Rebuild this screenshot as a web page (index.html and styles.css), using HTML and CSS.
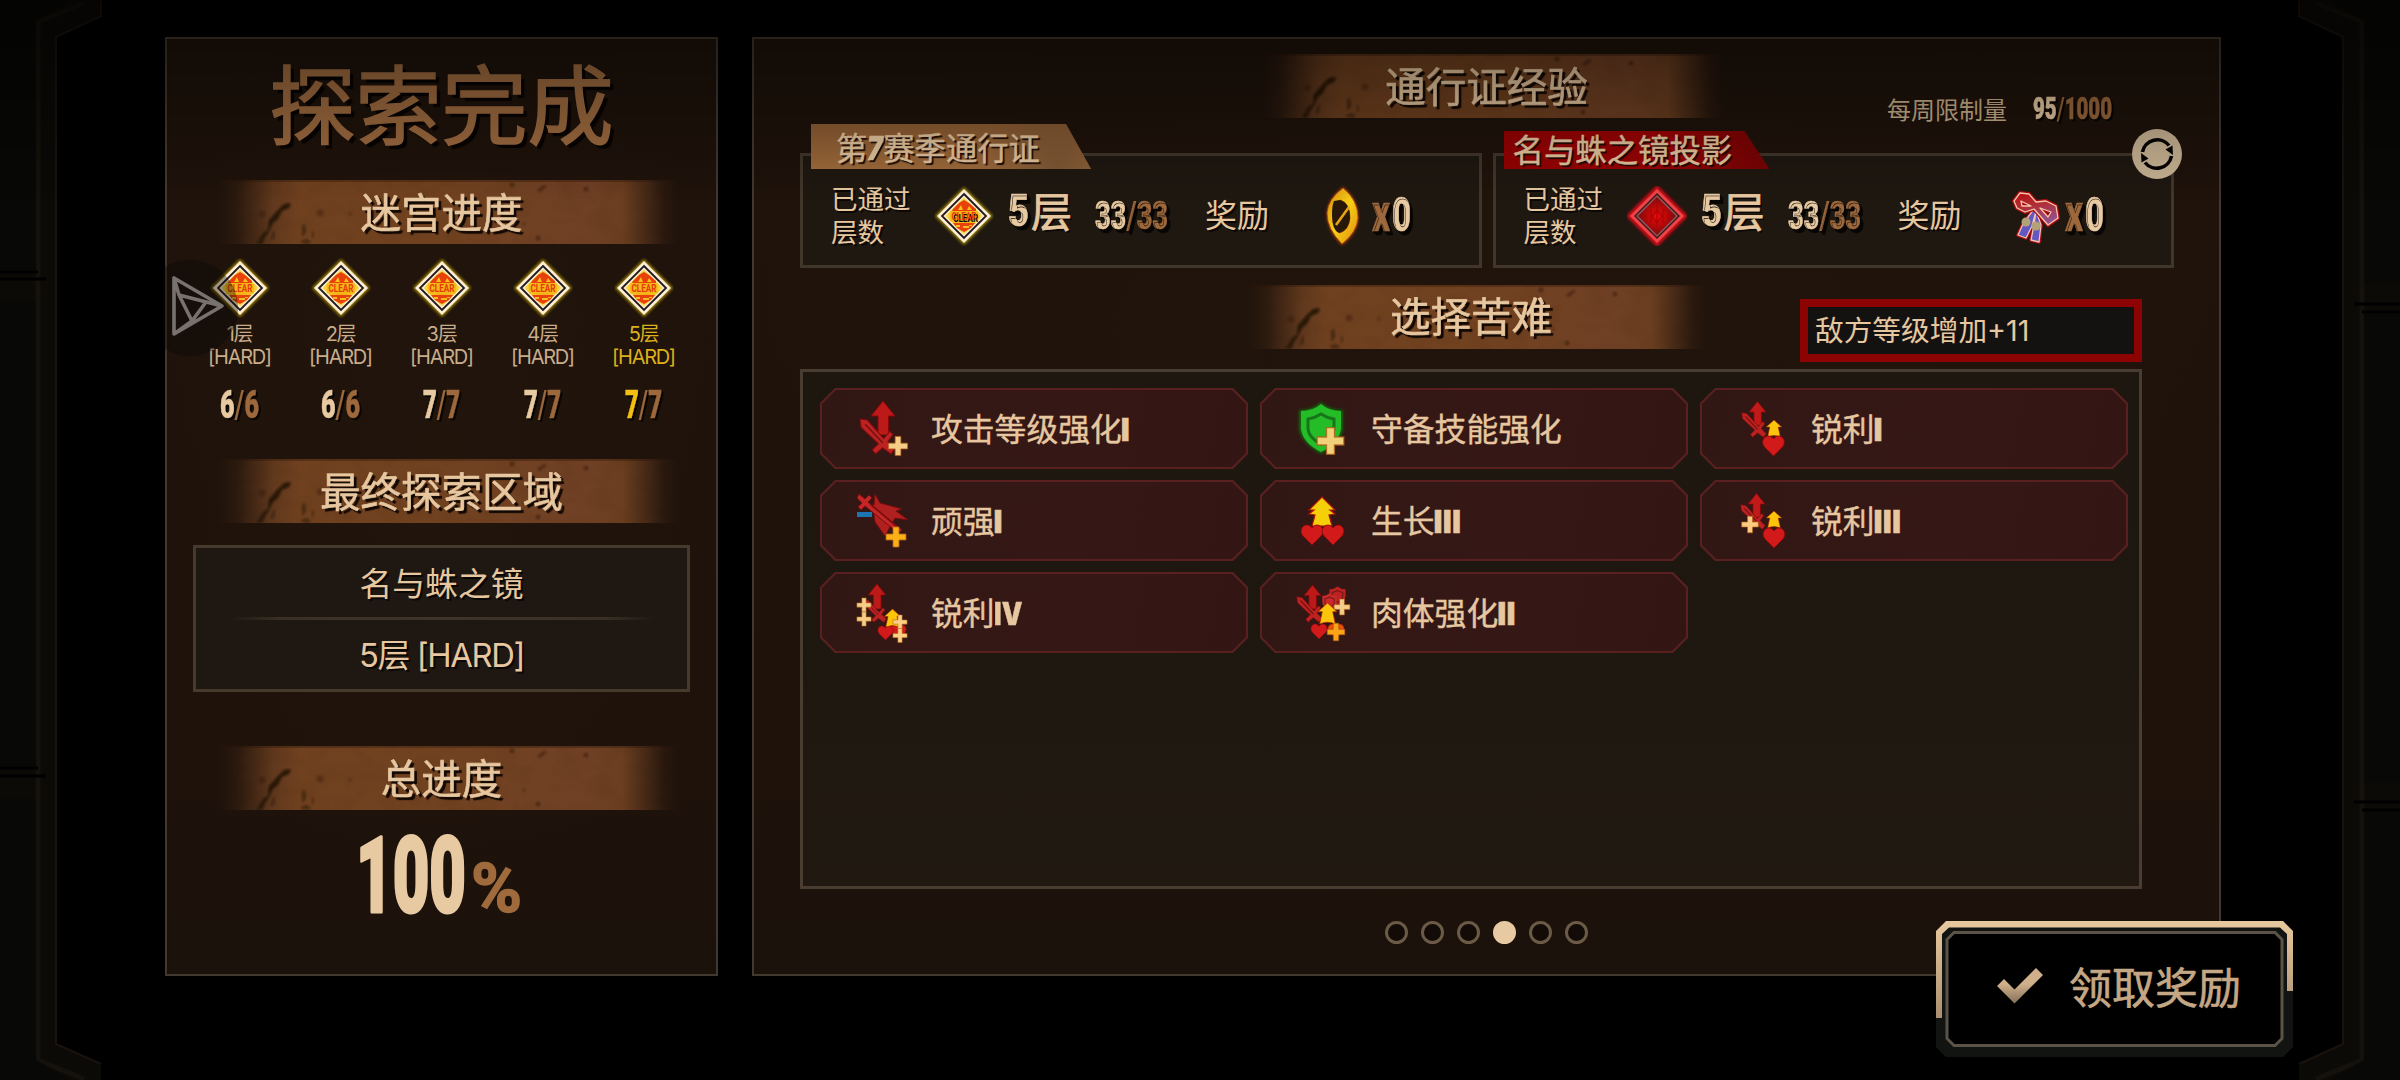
FILE: index.html
```html
<!DOCTYPE html>
<html lang="zh-CN">
<head>
<meta charset="utf-8">
<title>探索完成</title>
<link rel="stylesheet" href="styles.css">
</head>
<body>
<svg class="defs" width="0" height="0" aria-hidden="true">
  <defs>
    <linearGradient id="gold" x1="0" y1="0" x2="0" y2="1"><stop offset="0" stop-color="#e8c99f"/><stop offset="1" stop-color="#a98f70"/></linearGradient>
    <linearGradient id="check" x1="0" y1="0" x2="0" y2="1"><stop offset=".45" stop-color="#cfb08a"/><stop offset="1" stop-color="#84705a"/></linearGradient>
    <linearGradient id="leaf" x1="0" y1="0" x2="1" y2="1"><stop offset="0" stop-color="#d98a12"/><stop offset=".5" stop-color="#f6cf14"/><stop offset="1" stop-color="#e08a10"/></linearGradient>
    <linearGradient id="bow" x1="0" y1="0" x2="0.3" y2="1"><stop offset="0" stop-color="#b80d10"/><stop offset=".5" stop-color="#b0303a"/><stop offset="1" stop-color="#94508c"/></linearGradient>
    <radialGradient id="amber"><stop offset=".2" stop-color="#f0a50e"/><stop offset=".8" stop-color="#f5cd2c"/><stop offset="1" stop-color="#f8dd70"/></radialGradient>
    <radialGradient id="ruby"><stop offset=".1" stop-color="#e60808"/><stop offset="1" stop-color="#7a0a0c"/></radialGradient>
    <filter id="soft" x="-30%" y="-30%" width="160%" height="160%"><feGaussianBlur stdDeviation="1.6"/></filter>
    <filter id="grain" x="0" y="0" width="100%" height="100%">
      <feTurbulence type="fractalNoise" baseFrequency=".035 .05" numOctaves="3" seed="8"/>
      <feColorMatrix values="0 0 0 0 .05  0 0 0 0 .02  0 0 0 0 0  0 0 0 2.2 -1.0"/>
    </filter>
    <filter id="haze" x="-10%" y="-10%" width="120%" height="120%"><feGaussianBlur stdDeviation=".9"/></filter>
  </defs>
  <symbol id="scuff" viewBox="0 0 460 64">
    <rect width="460" height="64" filter="url(#grain)" opacity=".1"/>
    <g fill="#180c06" opacity=".75" filter="url(#haze)">
      <path d="M44 64l7-11 5-3 1-10 7-8 8-8 5-1 2 1-2 4-7 3-4 8-5 4-4 8-4 6-3 7z"/>
      <path d="M90 46l3-2 1 8-4 5zM100 50l2 5-2 4zM88 62l6-3 5 3-4 2zM61 52l2-2-1 9-3 1z" opacity=".6"/>
      <circle cx="108" cy="33" r="3.500" opacity=".35"/><circle cx="50" cy="34" r="3.500" opacity=".35"/><circle cx="138" cy="34" r="2" opacity=".3"/><circle cx="300" cy="5" r="2.200" opacity=".6"/>
      <path d="M325 10l7-5 3 1-7 6z" opacity=".5"/><circle cx="326" cy="58" r="2.200" opacity=".6"/><circle cx="374" cy="9" r="2.300" opacity=".5"/><circle cx="312" cy="44" r="1.800" opacity=".35"/>
    </g>
  </symbol>
  <symbol id="clear" viewBox="0 0 60 60">
    <path d="M30 1L59 30 30 59 1 30z" fill="#c4a60a" filter="url(#soft)" opacity=".8"/>
    <path d="M30 3L57 30 30 57 3 30z" fill="#fdeed8"/>
    <path d="M30 8L52 30 30 52 8 30z" fill="#fbe9c8" stroke="#211a1c" stroke-width="1.800"/>
    <path d="M30 11.500L48.500 30 30 48.500 11.500 30z" fill="url(#amber)"/>
    <path d="M19 23l6-6 5-3 5 3 7 6v2H18zM19 37h22l-4 5-7 4-7-4z" fill="#e8410b"/>
    <path d="M24 24l3-5 2 5zm9 0l2-4 3 4zM22 39h4v2h-4zm7 1h6v2h-6zm6-1h3v1h-3z" fill="#f5c019"/>
    <path d="M16 25.500h28v10H16z" fill="#f4b818"/>
    <text x="17.500" y="34.200" class="stamp" textLength="25" lengthAdjust="spacingAndGlyphs">CLEAR</text>
  </symbol>
  <symbol id="redgem" viewBox="0 0 60 60">
    <path d="M30-1L61 30 30 61-1 30z" fill="#e00d12" filter="url(#soft)" opacity=".9"/>
    <path d="M30 5L55 30 30 55 5 30z" fill="#3d1416" stroke="#ee4348" stroke-width="3"/>
    <path d="M30 10L50 30 30 50 10 30z" fill="url(#ruby)" stroke="#8d595d" stroke-width="1.500"/>
    <path d="M30 16v28M24 23v14M36 23v14M19 28v5M41 28v5M25 30l5-6 5 6-5 7z" stroke="#a80508" stroke-width="1.200" fill="none"/>
  </symbol>
  <symbol id="plus" viewBox="-12 -12 24 24"><path d="M-3-10h6v7h7v6H3v7h-6V3h-7v-6h7z" fill="currentColor" stroke="#b0601c" stroke-width="1" stroke-opacity=".8"/></symbol>
  <symbol id="heart" viewBox="0 0 24 22"><path d="M12 21L3 12C-1 7 2 1 7 1c3 0 4 2 5 3 1-1 2-3 5-3 5 0 8 6 4 11z" fill="currentColor" stroke="#8c0808" stroke-width=".8"/></symbol>
  <symbol id="arrow" viewBox="0 0 24 34"><path d="M12 0L24 15H17.500V34H7V15H0z" fill="currentColor" stroke="#8a0707" stroke-width="1"/></symbol>
  <symbol id="boost" viewBox="0 0 24 24"><path d="M12 0L23 10h-5l3 14q-9-4-18 0l3-14H1z" fill="currentColor" stroke="#b02005" stroke-width=".8"/></symbol>
  <symbol id="sword" viewBox="0 0 36 36"><path d="M1 1l7 1 16 18 6-7 3 3-5 7 7 7-4 5-8-6-7 6-3-4 6-6L2 9z" fill="#bd2222" stroke="#800c0e" stroke-width="1"/><path d="M6 6l17 18" stroke="#741012" stroke-width="1.500"/></symbol>
  <symbol id="shield" viewBox="0 0 42 50"><path d="M21 1q8 7 20 7v18q-2 14-20 23Q3 40 1 26V8Q13 8 21 1z" fill="currentColor"/><path d="M21 11q6 4 13 5v10q-1 9-13 15Q9 35 8 26V16q7-1 13-5z" fill="none" stroke="#000" stroke-opacity=".38" stroke-width="3"/></symbol>
</svg>

<svg class="hull" width="2400" height="1080" viewBox="0 0 2400 1080" aria-hidden="true">
  <path d="M0 0H101V16L56 37V1044L101 1064V1080H0z" fill="#0c0a07"/>
  <path d="M101 1V16L56 37V1044L101 1064" fill="none" stroke="#1a120d" stroke-width="2"/>
  <path d="M84 3L38 22V1060L84 1079" fill="none" stroke="#15110c" stroke-width="5"/>
  <path d="M0 0H70L36 20V270H0zM0 301H36V768H0zM0 799H36V1060L70 1080H0z" fill="#080806"/>
  <path d="M0 272H38M0 279H46M0 768H38M0 776H46" stroke="#000" stroke-width="3"/>
  <g transform="matrix(-1 0 0 1 2400 0)">
    <path d="M0 0H101V16L57 37V1044L101 1064V1080H0z" fill="#0c0a07"/>
    <path d="M101 1V16L57 37V1044L101 1064" fill="none" stroke="#1a120d" stroke-width="2"/>
    <path d="M84 3L38 22V1060L84 1079" fill="none" stroke="#15110c" stroke-width="5"/>
    <path d="M0 0H70L36 20V284H0zM0 314H36V783H0zM0 812H36V1060L70 1080H0z" fill="#080806"/>
    <path d="M0 304H46M0 312H38M0 802H46M0 810H38" stroke="#000" stroke-width="3"/>
  </g>
</svg>

<main class="screen">
  <section class="panel summary">
    <h1 class="title">探索完成</h1>
    <h2 class="banner"><svg class="scuff"><use href="#scuff"/></svg><span>迷宫进度</span></h2>
    <div class="floors">
      <div class="floor"><svg class="badge"><use href="#clear"/></svg><p>1层</p><p>[HARD]</p>
        <svg class="count" width="42" height="34"><text x="1" y="28" textLength="39" lengthAdjust="spacingAndGlyphs" class="hi">6<tspan class="lo slash">/</tspan><tspan class="lo">6</tspan></text></svg></div>
      <div class="floor"><svg class="badge"><use href="#clear"/></svg><p>2层</p><p>[HARD]</p>
        <svg class="count" width="42" height="34"><text x="1" y="28" textLength="39" lengthAdjust="spacingAndGlyphs" class="hi">6<tspan class="lo slash">/</tspan><tspan class="lo">6</tspan></text></svg></div>
      <div class="floor"><svg class="badge"><use href="#clear"/></svg><p>3层</p><p>[HARD]</p>
        <svg class="count" width="42" height="34"><text x="2" y="28" textLength="37" lengthAdjust="spacingAndGlyphs" class="hi">7<tspan class="lo slash">/</tspan><tspan class="lo">7</tspan></text></svg></div>
      <div class="floor"><svg class="badge"><use href="#clear"/></svg><p>4层</p><p>[HARD]</p>
        <svg class="count" width="42" height="34"><text x="2" y="28" textLength="37" lengthAdjust="spacingAndGlyphs" class="hi">7<tspan class="lo slash">/</tspan><tspan class="lo">7</tspan></text></svg></div>
      <div class="floor current"><svg class="badge"><use href="#clear"/></svg><p>5层</p><p>[HARD]</p>
        <svg class="count" width="42" height="34"><text x="2" y="28" textLength="37" lengthAdjust="spacingAndGlyphs" class="hi">7<tspan class="lo slash">/</tspan><tspan class="lo">7</tspan></text></svg></div>
    </div>
    <h2 class="banner"><svg class="scuff"><use href="#scuff"/></svg><span>最终探索区域</span></h2>
    <div class="region">
      <p>名与蛛之镜</p>
      <hr>
      <p class="tight">5层 [HARD]</p>
    </div>
    <h2 class="banner"><svg class="scuff"><use href="#scuff"/></svg><span>总进度</span></h2>
    <svg class="total" width="166" height="90">
      <text x="-3" y="82.500" font-size="106" textLength="110" lengthAdjust="spacingAndGlyphs" class="hi">100</text>
      <text x="112" y="82.500" font-size="69" textLength="51" lengthAdjust="spacingAndGlyphs" class="pct">%</text>
    </svg>
  </section>

  <section class="panel detail">
    <header class="head">
      <h2 class="banner"><svg class="scuff"><use href="#scuff"/></svg><span>通行证经验</span></h2>
      <div class="weekly">每周限制量
        <svg class="count" width="80" height="32"><text x="0" y="25" font-size="31" textLength="79" lengthAdjust="spacingAndGlyphs" class="hi">95<tspan class="lo slash">/</tspan><tspan class="lo">1000</tspan></text></svg>
      </div>
    </header>

    <div class="passes">
      <article class="pass">
        <h3 class="tab bronze">第<i>7</i>赛季通行证</h3>
        <span class="passed">已通过<br>层数</span>
        <svg class="badge"><use href="#clear"/></svg>
        <svg class="count five" width="23" height="46"><text x="0" y="37" font-size="45" textLength="21" lengthAdjust="spacingAndGlyphs" class="hi">5</text></svg><b class="ceng">层</b>
        <svg class="count ratio" width="76" height="46"><text x="0" y="36" font-size="39" textLength="73" lengthAdjust="spacingAndGlyphs" class="hi">33<tspan class="lo slash">/</tspan><tspan class="lo">33</tspan></text></svg>
        <span class="reward">奖励</span>
        <svg class="prize" width="50" height="64" viewBox="0 0 50 64">
          <path d="M24 3Q39 15 39 34 39 48 23 61 8 46 8 29 9 15 24 3z" fill="#c43a08" filter="url(#soft)"/>
          <path fill-rule="evenodd" d="M24 4Q39 16 39 34 38 48 23 60 8 45 8 29 9 15 24 4zM21 16Q15 18 14 31 14 47 21 49 30 46 31 34 31 19 21 16z" fill="url(#leaf)" stroke="#a84a08" stroke-width=".8"/>
          <path d="M15 17Q13 21 13 31 13 46 20 49 30 46 31 34 31 19 21 16z" fill="#281809"/>
          <path d="M30 23L17 41" stroke="#e8a312" stroke-width="2.600"/>
        </svg>
        <svg class="count" width="42" height="46"><text x="0" y="38" font-size="54" textLength="18" lengthAdjust="spacingAndGlyphs" class="lo">x</text><text x="20" y="38" font-size="49" textLength="19" lengthAdjust="spacingAndGlyphs" class="hi">0</text></svg>
      </article>
      <article class="pass">
        <h3 class="tab crimson">名与蛛之镜投影</h3>
        <span class="passed">已通过<br>层数</span>
        <svg class="badge"><use href="#redgem"/></svg>
        <svg class="count five" width="23" height="46"><text x="0" y="37" font-size="45" textLength="21" lengthAdjust="spacingAndGlyphs" class="hi">5</text></svg><b class="ceng">层</b>
        <svg class="count ratio" width="76" height="46"><text x="0" y="36" font-size="39" textLength="73" lengthAdjust="spacingAndGlyphs" class="hi">33<tspan class="lo slash">/</tspan><tspan class="lo">33</tspan></text></svg>
        <span class="reward">奖励</span>
        <svg class="prize" width="50" height="64" viewBox="0 0 50 64">
          <g stroke-linejoin="round">
          <path d="M22 25L11 40 6 51 14 54 20 42 24 27zM24 27L22 41 19 56 27 58 29 41z" fill="#6258c4" stroke="#a80b12" stroke-width="3.600"/>
          <path d="M22 25L11 40 6 51 14 54 20 42 24 27zM24 27L22 41 19 56 27 58 29 41z" fill="#6258c4" stroke="#f6c3ae" stroke-width="1.300"/>
          <path fill-rule="evenodd" d="M8 9L17 10 24 18 34 17 44 22 46 34 36 41 22 25 13 28 5 24 2 17zM9 17L10 22 19 22zM28 24L36 33 39 28z" fill="url(#bow)" stroke="#a80b12" stroke-width="4"/>
          <path fill-rule="evenodd" d="M8 9L17 10 24 18 34 17 44 22 46 34 36 41 22 25 13 28 5 24 2 17zM9 17L10 22 19 22zM28 24L36 33 39 28z" fill="url(#bow)" stroke="#f8c5a8" stroke-width="1.300"/>
          </g>
          <circle cx="14" cy="38" r="4.500" fill="#b3a178"/><circle cx="24" cy="42" r="4.500" fill="#b3a178"/>
        </svg>
        <svg class="count" width="42" height="46"><text x="0" y="38" font-size="54" textLength="18" lengthAdjust="spacingAndGlyphs" class="lo">x</text><text x="20" y="38" font-size="49" textLength="19" lengthAdjust="spacingAndGlyphs" class="hi">0</text></svg>
        <svg class="swap" width="50" height="50" viewBox="0 0 50 50">
          <circle cx="25" cy="25" r="25" fill="#c8b393"/>
          <path d="M10.500 23A15 15 0 0 1 37 16.500M39.500 27A15 15 0 0 1 13 33.500" fill="none" stroke="#050403" stroke-width="3.600"/>
          <path d="M33.500 20.500L40.500 16.500 41 26zM16.500 29.500L9.500 33.500 9 24z" fill="#050403"/>
        </svg>
      </article>
    </div>

    <div class="burden">
      <header class="head">
        <h2 class="banner"><svg class="scuff"><use href="#scuff"/></svg><span>选择苦难</span></h2>
        <div class="level">敌方等级增加+11</div>
      </header>
      <ul class="list">
        <li class="card"><svg class="icon" viewBox="30 0 70 81">
          <use href="#arrow" x="51" y="13" width="24" height="34" color="#bb1a19"/><use href="#sword" x="39" y="30" width="37" height="37"/><use href="#plus" x="66.500" y="46.500" width="23" height="23" color="#f6cd86"/></svg><span>攻击等级强化<em>I</em></span></li>
        <li class="card"><svg class="icon" viewBox="30 0 70 81">
          <path d="M61 14q8 8 22 8v20q-3 13-22 24-19-11-22-24V22q14 0 22-8z" fill="#0b7a10" filter="url(#soft)" opacity=".8"/><use href="#shield" x="40" y="15" width="42" height="50" color="#24bd27"/><use href="#plus" x="54.500" y="37" width="32" height="32" color="#f0d078"/></svg><span>守备技能强化</span></li>
        <li class="card"><svg class="icon" viewBox="30 0 70 81">
          <use href="#arrow" x="49" y="13" width="17" height="25" color="#c01a1a"/><use href="#sword" x="41" y="24" width="26" height="26"/><use href="#boost" x="65.500" y="32" width="17" height="17" color="#fcc40a"/><use href="#heart" x="61.500" y="47" width="24" height="22" color="#d31a1a"/></svg><span>锐利<em>I</em></span></li>
        <li class="card"><svg class="icon" viewBox="30 0 70 81">
          <g stroke="#7a0c0e" stroke-width="1"><path d="M55 14l5 9 22 6-6 2 12 9-13-2-10 18-10-14-2-14-15-2 16-1z" fill="#b0201f"/><path d="M39 14l6 5 4-4 3 3-4 4 34 28-4 3-33-27-4 4-3-3 4-4-5-5z" fill="#c22626"/></g>
          <path d="M50 24l26 22" stroke="#7a0c0e" stroke-width="1.500"/><path d="M37 32h15v5H37z" fill="#1c74b0"/><use href="#plus" x="64" y="45" width="24" height="24" color="#fbb016"/></svg><span>顽强<em>I</em></span></li>
        <li class="card"><svg class="icon" viewBox="30 0 70 81">
          <path d="M62 17L75 30l-5 0 5 4-6 1 3 11H52l3-11-6-1 5-4-5 0z" fill="#f5cf0a" stroke="#b01405" stroke-width="1.200"/><use href="#heart" x="40" y="44" width="24" height="22" color="#d31a1a"/><use href="#heart" x="61" y="44" width="24" height="22" color="#d31a1a"/></svg><span>生长<em>III</em></span></li>
        <li class="card"><svg class="icon" viewBox="30 0 70 81">
          <use href="#arrow" x="48" y="13" width="17" height="25" color="#c01a1a"/><use href="#sword" x="40" y="24" width="26" height="26"/><use href="#plus" x="40" y="34.500" width="20" height="20" color="#fcca80"/><use href="#boost" x="65.500" y="31" width="17" height="17" color="#fcc40a"/><use href="#heart" x="62" y="47" width="24" height="22" color="#d31a1a"/></svg><span>锐利<em>III</em></span></li>
        <li class="card"><svg class="icon" viewBox="30 0 70 81">
          <use href="#arrow" x="48" y="12" width="18" height="25" color="#bb1a19"/><use href="#sword" x="43" y="27" width="24" height="24"/><use href="#plus" x="35.500" y="24.500" width="17" height="17" color="#f6cd86"/><use href="#plus" x="35.500" y="38.500" width="17" height="17" color="#f6cd86"/><use href="#heart" x="70" y="52" width="17" height="16" color="#d31a1a"/><use href="#heart" x="57" y="53" width="17" height="16" color="#d31a1a"/><use href="#boost" x="63.500" y="37" width="18" height="18" color="#fcc40a"/><use href="#plus" x="71.500" y="41.500" width="17" height="17" color="#fcd084"/><use href="#plus" x="71.500" y="55" width="17" height="17" color="#fcd084"/></svg><span>锐利<em class="four">IV</em></span></li>
        <li class="card"><svg class="icon" viewBox="30 0 70 81">
          <use href="#arrow" x="44" y="12" width="17" height="26" color="#bb1a19"/><use href="#sword" x="36" y="24" width="27" height="27"/><use href="#shield" x="68" y="14" width="19" height="20" color="#bd2222"/><use href="#shield" x="61" y="21" width="17" height="18" color="#c92929"/><use href="#plus" x="72.500" y="25.500" width="19" height="19" color="#f6cd86"/><use href="#heart" x="50" y="51" width="18" height="17" color="#d31a1a"/><use href="#heart" x="67" y="51" width="18" height="17" color="#e2500c"/><use href="#boost" x="57" y="31" width="21" height="21" color="#fcc40a"/><use href="#plus" x="65.500" y="49.500" width="21" height="21" color="#fba416"/></svg><span>肉体强化<em>II</em></span></li>
      </ul>
    </div>

    <nav class="dots"><i></i><i></i><i></i><i class="on"></i><i></i><i></i></nav>
  </section>
</main>

<div class="shade"></div>

<svg class="pointer" width="96" height="96" viewBox="0 0 96 96" aria-hidden="true">
  <circle cx="48" cy="48" r="48" fill="#0b0708" fill-opacity=".38"/>
  <path d="M32 18v56L80 46zM32 18l5 17 43 11M37 35l13 26 14-19M32 74l18-13" fill="none" stroke="#9a9492" stroke-opacity=".75" stroke-width="3.600" stroke-linejoin="round"/>
</svg>

<button class="claim">
  <svg class="frame" width="357" height="136" viewBox="0 0 357 136" aria-hidden="true">
    <path d="M10 0H347L357 10V126L347 136H10L0 126V10z" fill="#121412"/>
    <path d="M0 97V10L10 0H347L357 10V70H351V13L344 6.500H13L6 13V97z" fill="url(#gold)"/>
    <path d="M18 11.500H339L346 18.500V117.500L339 124.500H18L11 117.500V18.500z" fill="#000" stroke="#5b5348" stroke-width="3"/>
  </svg>
  <svg class="tick" width="46" height="36" viewBox="0 0 46 36"><path d="M0 18L7 11 17.500 21.500 39 0 46 7 17.500 35.500z" fill="url(#check)"/></svg>
  <span>领取奖励</span>
</button>
</body>
</html>
```

FILE: styles.css
```css
* { box-sizing: border-box; margin: 0; padding: 0; }

body {
  width: 2400px;
  height: 1080px;
  overflow: hidden;
  position: relative;
  background: #000;
  color: #e6c7a0;
  font-family: "Inter", "Noto Sans CJK SC", sans-serif;
}

svg { display: block; flex: none; }
.defs, .hull { position: absolute; left: 0; top: 0; }

.screen {
  position: relative;
  display: flex;
  gap: 34px;
  padding: 37px 0 0 165px;
}

.panel {
  height: 939px;
  border: 2px solid #43382d;
  background:
    radial-gradient(ellipse at 50% 45%, rgba(34, 22, 12, .5), rgba(26, 15, 10, 0) 75%),
    linear-gradient(#1f130b, #1e120b 80%, #1b110b);
}
.summary { width: 553px; display: flex; flex-direction: column; align-items: center; }
.detail { width: 1469px; padding: 15px 0 0 46px; }

.title {
  height: 141px;
  line-height: 136px;
  font-size: 86px;
  font-weight: 400;
  -webkit-text-stroke: 1.6px #a06c40;
  color: #a06c40;
  text-shadow: 4px 4px 1px #080403;
}

.banner {
  position: relative;
  width: 460px;
  height: 64px;
  line-height: 67px;
  text-align: center;
  font-size: 40.5px;
  font-weight: 400;
}
.banner::before {
  content: "";
  position: absolute;
  inset: 0 -6px 0 6px;
  background: linear-gradient(90deg, rgba(108, 63, 32, 0) 0, rgba(108, 63, 32, .15) 4%, rgba(108, 63, 32, .85) 12%, #70411f 18%, #714220 50%, #704025 80%, #6a3e20 88%, rgba(106, 60, 32, .15) 97%, rgba(106, 60, 32, 0));
  border-top: 2px solid rgba(40, 20, 8, .35);
}
.scuff {
  position: absolute;
  left: 0;
  top: 0;
  width: 460px;
  height: 64px;
  -webkit-mask-image: linear-gradient(90deg, transparent 5%, #000 12%, #000 88%, transparent);
  mask-image: linear-gradient(90deg, transparent 5%, #000 12%, #000 88%, transparent);
}
.banner span { position: relative; text-shadow: 3px 3px 1px #100804; -webkit-text-stroke: .6px #e6c7a0; }

.stamp { font: 700 10px Roboto, sans-serif; fill: #e63a08; }

.floors { display: grid; grid-template-columns: repeat(5, 101px); height: 215px; padding-top: 14px; }
.floor { display: flex; flex-direction: column; align-items: center; }
.badge { width: 60px; height: 60px; overflow: visible; }
.floor .badge { margin-bottom: 4px; }
.floor p { height: 23px; line-height: 24px; font-size: 20px; letter-spacing: -1.3px; color: #c9ad8b; white-space: nowrap; }
.floor.current p { color: #dcb01c; }
.floor .count { margin-top: 22px; }

.count, .total { font-family: Roboto, sans-serif; font-weight: 900; overflow: visible; filter: drop-shadow(2px 2px 0 rgba(5, 3, 2, .85)); }
.total { filter: none; margin-top: 19px; }
.count { font-size: 38px; }
.hi { fill: #e8caa2; stroke: #e8caa2; stroke-width: .6; }
.total .hi { stroke-width: 3; stroke-linejoin: round; }
.lo { fill: #9c683c; stroke: #9c683c; stroke-width: .6; }
.slash { font-weight: 500; stroke-width: .2; }
.pct { fill: #a06b3c; font-weight: 700; stroke: #a06b3c; stroke-width: 1.5; }
.current .hi { fill: #f2bf12; stroke: #f2bf12; }
.current .lo { fill: #9c683c; stroke: #9c683c; }

.region {
  width: 497px;
  height: 147px;
  margin: 22px 0 54px;
  border: 3px solid #463a2d;
  background: #1f1812;
  text-align: center;
  font-size: 32.8px;
  line-height: 73px;
  text-shadow: 2px 2px 0 #0b0705;
}
.region p { height: 69px; }
.region .tight { line-height: 71px; letter-spacing: -1.4px; }
.region hr { width: 424px; height: 3px; margin: 0 auto; border: 0; background: linear-gradient(90deg, transparent, #3a3025 12%, #3f3428 50%, #3a3025 88%, transparent); }

.head { display: grid; grid-template-columns: 1fr 460px 1fr; }
.head .banner { grid-column: 2; }
.detail > .head { width: 1373px; height: 99px; }
.weekly { display: flex; justify-content: flex-end; gap: 26px; padding: 41px 60px 0 0; font-size: 24px; line-height: 32px; color: #cdb28e; white-space: nowrap; }
.weekly .count { margin-top: -1px; }

.passes { display: flex; gap: 11px; width: 1374px; height: 132px; }
.pass {
  position: relative;
  flex: 1;
  height: 115px;
  padding: 11px 0 0 28px;
  display: flex;
  align-items: center;
  border: 3px solid #41362a;
  background: #1f1811;
  text-shadow: 2px 2px 0 #0b0705;
}
.tab {
  position: absolute;
  left: 8px;
  font-weight: 400;
  white-space: nowrap;
  text-shadow: 2px 2px 1px #1a0b04;
  -webkit-text-stroke: .4px #e6c7a0;
  clip-path: polygon(0 0, calc(100% - 25px) 0, 100% 100%, 0 100%);
}
.bronze { top: -32px; width: 280px; height: 45px; padding-left: 25px; line-height: 48px; font-size: 31.3px; background: radial-gradient(circle at 88% 90%, #7f5735, rgba(127, 87, 53, 0) 32%), linear-gradient(#8f5e33, #a06c3c); }
.bronze i { display: inline-block; width: 16px; font-weight: 900; font-size: 33px; transform: scaleX(.8); transform-origin: 0 50%; }
.crimson { top: -25px; width: 266px; height: 38px; padding-left: 9px; line-height: 41px; font-size: 31.4px; background: linear-gradient(90deg, #970203, #9d0304 60%, #760405); }
.passed { width: 80px; margin-right: 23px; font-size: 26.5px; line-height: 33px; white-space: nowrap; }
.pass .badge { margin-right: 14px; }
.ceng { width: 41px; margin-right: 23px; font-size: 41px; line-height: 46px; font-weight: 400; margin-top: -8px; -webkit-text-stroke: .8px #e6c7a0; }
.five { margin-top: -8px; }
.ratio { margin-right: 34px; }
.reward { width: 64px; margin-right: 50px; font-size: 32px; line-height: 40px; white-space: nowrap; }
.prize { margin-right: 3px; }
.swap { position: absolute; right: -11px; top: -27px; }

.burden { width: 1342px; }
.burden .head { height: 84px; }
.burden .banner { line-height: 65px; }
.level {
  justify-self: end;
  width: 342px;
  height: 63px;
  margin-top: 14px;
  padding-left: 7px;
  border: 8px solid #8d0203;
  background: #141210;
  font-size: 28.7px;
  line-height: 47px;
}

.list {
  height: 520px;
  padding: 16px 17px;
  border: 3px solid #483d30;
  background: linear-gradient(#1d1710, #201811);
  list-style: none;
  display: grid;
  grid-template-columns: repeat(3, 428px);
  grid-auto-rows: 81px;
  gap: 11px 12px;
}
.card {
  position: relative;
  isolation: isolate;
  display: flex;
  align-items: center;
  padding-left: 30px;
  font-size: 31.8px;
  line-height: 40px;
  background: #5a2020;
  clip-path: polygon(15px 0, calc(100% - 15px) 0, 100% 15px, 100% calc(100% - 15px), calc(100% - 15px) 100%, 15px 100%, 0 calc(100% - 15px), 0 15px);
}
.card::before {
  content: "";
  position: absolute;
  z-index: -1;
  inset: 2px;
  background: linear-gradient(100deg, #311714, #351815 60%, #331614);
  clip-path: polygon(14px 0, calc(100% - 14px) 0, 100% 14px, 100% calc(100% - 14px), calc(100% - 14px) 100%, 14px 100%, 0 calc(100% - 14px), 0 14px);
}
.card span { margin-top: 2px; -webkit-text-stroke: .4px #e6c7a0; }
.icon { width: 70px; height: 81px; margin-right: 11px; }
.card em { font-style: normal; font-weight: 900; font-size: 31px; letter-spacing: .2px; margin-left: -1px; }
.card .four { display: inline-block; transform: scaleX(.84); transform-origin: 0 50%; }

.dots { display: flex; justify-content: center; gap: 13px; width: 1372px; margin-top: 32px; }
.dots i { width: 23px; height: 23px; border: 3px solid #6b5a45; border-radius: 50%; background: #120b07; }
.dots .on { background: #e8caa2; border-color: #e8caa2; }

.shade { position: absolute; inset: 0 0 auto; height: 200px; background: linear-gradient(rgba(0, 0, 0, .5), rgba(0, 0, 0, 0)); pointer-events: none; }

.pointer { position: absolute; left: 142px; top: 260px; clip-path: inset(0 0 0 22px); }

.claim {
  position: absolute;
  left: 1936px;
  top: 921px;
  width: 357px;
  height: 136px;
  display: flex;
  align-items: center;
  padding: 0 0 0 61px;
  border: 0;
  background: none;
  font: 400 43px/1 "Inter", "Noto Sans CJK SC", sans-serif;
  color: #c4a784;
}
.frame { position: absolute; left: 0; top: 0; }
.tick, .claim span { position: relative; }
.tick { margin: -6px 26px 0 0; }
.claim span { margin-top: -2px; white-space: nowrap; -webkit-text-stroke: .6px #c4a784; }
```
